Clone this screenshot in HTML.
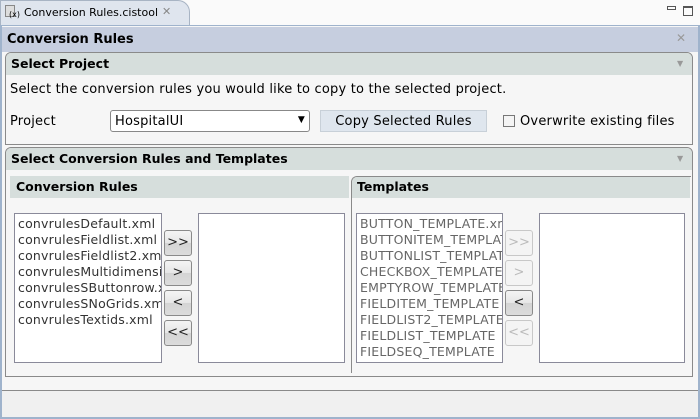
<!DOCTYPE html>
<html><head><meta charset="utf-8"><style>
*{box-sizing:border-box;margin:0;padding:0}
body{width:700px;height:419px;background:#f6f6f6;font-family:"DejaVu Sans","Liberation Sans",sans-serif;font-size:13px;letter-spacing:0.2px;color:#000;position:relative;overflow:hidden}
.a{position:absolute}
.hdr{background:#d6dedc;font-weight:bold;font-size:12.5px;letter-spacing:0}
.list{background:#fff;border:1px solid #8a8a9a;padding:2px 3px;line-height:16px;overflow:hidden;white-space:nowrap;color:#333;font-size:12.5px;letter-spacing:0.2px}
.btn{width:28px;height:26px;border:1px solid #8a8a8a;border-radius:3px;background:linear-gradient(#f4f4f4,#e6e6e6 50%,#d4d4d4 50%,#dcdcdc);text-align:center;line-height:24px;font-size:13px;color:#222;letter-spacing:0}
.dis{border-color:#c8c8c8;background:#f4f4f4;color:#bbb}
.dim{color:#666}
</style></head><body>
<div class="a" style="left:0;top:0;width:700px;height:26px;background:#fafafa"></div>
<div class="a" style="left:0;top:0;width:190px;height:26px;background:#dfe5ee;border:1px solid #a8b4c4;border-bottom:none;border-radius:0 12px 0 0"></div>
<div class="a" style="left:5px;top:5px;width:10px;height:12px;border:1px solid #888;background:#ddd"></div>
<div class="a" style="left:9px;top:10px;font-size:8px;letter-spacing:0">(x)</div>
<div class="a" style="left:24px;top:6px;font-size:11px;letter-spacing:0">Conversion Rules.cistool</div>
<div class="a" style="left:162px;top:5px;color:#888;font-size:11px">✕</div>
<div class="a" style="left:667px;top:6px;width:9px;height:4px;border:1px solid #555"></div>
<div class="a" style="left:683px;top:6px;width:10px;height:10px;border:1px solid #555;border-top-width:2px"></div>
<div class="a" style="left:0;top:25px;width:700px;height:394px;border:2px solid #9fb3cc;border-top:1px solid #9fb3cc"></div>
<div class="a" style="left:2px;top:27px;width:696px;height:25px;background:#c6cedf;font-weight:bold;font-size:13px;letter-spacing:0;padding:5px 5px">Conversion Rules</div>
<div class="a" style="left:676px;top:31px;color:#999;font-size:12px">✕</div>
<div class="a" style="left:5px;top:52px;width:688px;height:93px;border:1px solid #8a8a8a;border-radius:6px 6px 0 0;background:#f6f6f6"></div>
<div class="a hdr" style="left:6px;top:53px;width:686px;height:22px;border-radius:5px 5px 0 0;padding:3px 5px">Select Project</div>
<div class="a" style="left:677px;top:59px;color:#999;font-size:8px">▼</div>
<div class="a" style="left:10px;top:82px">Select the conversion rules you would like to copy to the selected project.</div>
<div class="a" style="left:10px;top:114px">Project</div>
<div class="a" style="left:110px;top:110px;width:200px;height:22px;border:1px solid #888;border-radius:3px;background:#fff;padding:3px 4px">HospitalUI<span style="position:absolute;right:4px;top:4px;font-size:9px">▼</span></div>
<div class="a" style="left:320px;top:110px;width:167px;height:22px;background:#dfe6ee;border:1px solid #c8d0d8;text-align:center;line-height:21px">Copy Selected Rules</div>
<div class="a" style="left:503px;top:115px;width:12px;height:12px;border:1px solid #777;background:#f4f4f4"></div>
<div class="a" style="left:520px;top:114px">Overwrite existing files</div>
<div class="a" style="left:5px;top:147px;width:688px;height:230px;border:1px solid #8a8a8a;border-radius:6px 6px 0 0"></div>
<div class="a hdr" style="left:6px;top:148px;width:686px;height:22px;border-radius:5px 5px 0 0;padding:3px 5px">Select Conversion Rules and Templates</div>
<div class="a" style="left:677px;top:154px;color:#999;font-size:8px">▼</div>
<div class="a hdr" style="left:10px;top:176px;width:339px;height:22px;padding:3px 6px">Conversion Rules</div>
<div class="a" style="left:351px;top:176px;width:340px;height:197px;border:1px solid #8a8a8a;border-right:none;border-bottom:none;border-radius:6px 0 0 0"></div>
<div class="a hdr" style="left:352px;top:177px;width:338px;height:21px;border-radius:5px 0 0 0;padding:2px 5px">Templates</div>
<div class="a list" style="left:14px;top:213px;width:148px;height:150px">convrulesDefault.xml<br>convrulesFieldlist.xml<br>convrulesFieldlist2.xml<br>convrulesMultidimensional<br>convrulesSButtonrow.xml<br>convrulesSNoGrids.xml<br>convrulesTextids.xml</div>
<div class="a btn" style="left:164px;top:230px">&gt;&gt;</div>
<div class="a btn" style="left:164px;top:260px">&gt;</div>
<div class="a btn" style="left:164px;top:290px">&lt;</div>
<div class="a btn" style="left:164px;top:320px">&lt;&lt;</div>
<div class="a list" style="left:198px;top:213px;width:147px;height:150px"></div>
<div class="a list dim" style="left:356px;top:213px;width:147px;height:150px">BUTTON_TEMPLATE.xml<br>BUTTONITEM_TEMPLATE<br>BUTTONLIST_TEMPLATE<br>CHECKBOX_TEMPLATE<br>EMPTYROW_TEMPLATE<br>FIELDITEM_TEMPLATE<br>FIELDLIST2_TEMPLATE<br>FIELDLIST_TEMPLATE<br>FIELDSEQ_TEMPLATE</div>
<div class="a btn dis" style="left:505px;top:230px">&gt;&gt;</div>
<div class="a btn dis" style="left:505px;top:260px">&gt;</div>
<div class="a btn" style="left:505px;top:290px">&lt;</div>
<div class="a btn dis" style="left:505px;top:320px">&lt;&lt;</div>
<div class="a list" style="left:539px;top:213px;width:146px;height:150px"></div>
<div class="a" style="left:2px;top:390px;width:696px;height:27px;border-top:1px solid #8a8a8a;background:#f0f0f0"></div>
</body></html>
